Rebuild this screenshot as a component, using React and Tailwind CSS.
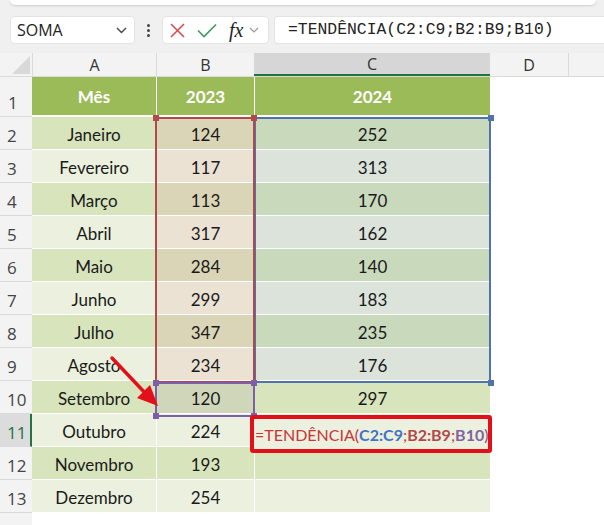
import React from "react";

const months = [
  ["Janeiro", 124, 252],
  ["Fevereiro", 117, 313],
  ["Março", 113, 170],
  ["Abril", 317, 162],
  ["Maio", 284, 140],
  ["Junho", 299, 183],
  ["Julho", 347, 235],
  ["Agosto", 234, 176],
  ["Setembro", 120, 297],
  ["Outubro", 224, null],
  ["Novembro", 193, null],
  ["Dezembro", 254, null],
];

function cellBg(col, rowIdx) {
  const even = rowIdx % 2 === 0;
  if (col === "A") return even ? "bg-[#d8e4bc]" : "bg-[#ebf1de]";
  if (col === "B") {
    if (rowIdx <= 7) return even ? "bg-[#dad5b6]" : "bg-[#ebe2d4]";
    if (rowIdx === 8) return "bg-[#cfd6b9]";
    return even ? "bg-[#d8e4bc]" : "bg-[#ebf1de]";
  }
  if (col === "C") {
    if (rowIdx <= 7) return even ? "bg-[#c9d9bc]" : "bg-[#dbe3db]";
    return even ? "bg-[#d8e4bc]" : "bg-[#ebf1de]";
  }
  return "bg-white";
}

function Handle({ className }) {
  return <div className={"absolute w-[6px] h-[6px] " + className} />;
}

export default function App() {
  return (
    <div className="w-[604px] h-[525px] overflow-hidden bg-[#f0f0f0] relative" style={{ fontFamily: "Lato, 'Open Sans', sans-serif" }}>
      {/* ribbon bottom */}
      <div className="h-[5px] ml-[10px] mr-[8px] bg-white rounded-b-[6px] shadow-[0_1px_2px_rgba(0,0,0,0.15)]" />

      {/* formula bar */}
      <div className="flex items-center h-[28px] mt-[11px] pl-[10px]">
        <div className="w-[125px] h-[28px] bg-white rounded-[4px] border border-[#e3e3e3] flex items-center justify-between pl-[6px] pr-[7px]">
          <span className="text-[16px] text-[#222]" style={{ fontFamily: "'Open Sans', sans-serif" }}>SOMA</span>
          <svg width="11" height="7" viewBox="0 0 11 7"><path d="M1 1 L5.5 5.5 L10 1" fill="none" stroke="#444" strokeWidth="1.4" /></svg>
        </div>
        <div className="w-[27px] flex flex-col items-center gap-[2px]">
          <div className="w-[3px] h-[3px] bg-[#444] rounded-full" />
          <div className="w-[3px] h-[3px] bg-[#444] rounded-full" />
          <div className="w-[3px] h-[3px] bg-[#444] rounded-full" />
        </div>
        <div className="w-[107px] h-[28px] bg-white rounded-[4px] border border-[#e3e3e3] flex items-center pl-[7px]">
          <svg width="15" height="15" viewBox="0 0 15 15"><path d="M1 1 L14 14 M14 1 L1 14" stroke="#d9454a" strokeWidth="1.5" /></svg>
          <svg className="ml-[12px]" width="20" height="15" viewBox="0 0 20 15"><path d="M1 7.5 L7 13.5 L19 1.5" fill="none" stroke="#3d9b5a" strokeWidth="1.6" /></svg>
          <span className="ml-[12px] italic text-[20px] leading-none text-[#222]" style={{ fontFamily: "'Liberation Serif', serif" }}>fx</span>
          <svg className="ml-[6px]" width="10" height="6" viewBox="0 0 10 6"><path d="M1 1 L5 5 L9 1" fill="none" stroke="#999" strokeWidth="1.2" /></svg>
        </div>
        <div className="flex-1 ml-[5px] h-[28px] bg-white rounded-l-[4px] border border-r-0 border-[#e3e3e3] flex items-center pl-[13px]">
          <span className="text-[16.4px] text-[#222]" style={{ fontFamily: "'Liberation Mono', monospace" }}>=TENDÊNCIA(C2:C9;B2:B9;B10)</span>
        </div>
      </div>

      {/* grid */}
      <div className="relative mt-[9px]">
        {/* column headers */}
        <div className="flex h-[24px] bg-[#f3f3f3] border-b border-[#dadada] text-[16px] text-[#333]" style={{ fontFamily: "'Open Sans', sans-serif" }}>
          <div className="w-[32px] relative">
            <svg className="absolute left-[12px] top-[3px]" width="18" height="18" viewBox="0 0 18 18"><path d="M18 0 L18 18 L0 18 Z" fill="#d9d9d9" /></svg>
          </div>
          <div className="w-[124px] flex items-center justify-center border-l border-[#dadada]">A</div>
          <div className="w-[98px] flex items-center justify-center border-l border-[#dadada]">B</div>
          <div className="w-[236px] flex items-center justify-center bg-[#d6d6d6] border-b-2 border-[#217346]">C</div>
          <div className="w-[79px] flex items-center justify-center border-r border-[#dadada]">D</div>
          <div className="flex-1" />
        </div>

        {/* row 1 */}
        <div className="flex h-[40px]">
          <div className="w-[32px] bg-[#f3f3f3] border-b border-[#dadada] flex items-end pb-[1px] pl-[8px] text-[17px] text-[#444]" style={{ fontFamily: "'Open Sans', sans-serif" }}>1</div>
          <div className="w-[124px] bg-[#9bbb59] border-b-[2px] border-white flex items-center justify-center pt-[2px] text-white font-bold text-[17px]">Mês</div>
          <div className="w-[98px] bg-[#9bbb59] border-l border-b-[2px] border-white flex items-center justify-center pt-[2px] text-white font-bold text-[17px]">2023</div>
          <div className="w-[236px] bg-[#9bbb59] border-l border-b-[2px] border-white flex items-center justify-center pt-[2px] text-white font-bold text-[17px]">2024</div>
          <div className="flex-1 bg-white" />
        </div>

        {/* data rows */}
        {months.map(([m, b, c], i) => {
          const rowNum = i + 2;
          const active = rowNum === 11;
          return (
            <div key={m} className="flex h-[33px] text-[17px] text-[#1a1a1a]">
              <div
                className={
                  "w-[32px] border-b border-[#dadada] flex items-end pb-[1px] pl-[7px] text-[17px] " +
                  (active ? "bg-[#dcdcdc] text-[#217346] border-r-2 border-r-[#217346]" : "bg-[#f3f3f3] text-[#444]")
                }
                style={{ fontFamily: "'Open Sans', sans-serif" }}
              >
                {rowNum}
              </div>
              <div className={"w-[124px] border-b border-white flex items-center justify-center pt-[3px] " + cellBg("A", i)}>{m}</div>
              <div className={"w-[98px] border-l border-b border-white flex items-center justify-center pt-[3px] " + cellBg("B", i)}>{b}</div>
              <div className={"w-[236px] border-l border-b border-white flex items-center justify-center pt-[3px] " + cellBg("C", i)}>{c}</div>
              <div className="flex-1 bg-white" />
            </div>
          );
        })}

        {/* row 14 */}
        <div className="flex h-[33px]">
          <div className="w-[32px] bg-[#f3f3f3] pl-[7px] pt-[6px] text-[17px] text-[#444]" style={{ fontFamily: "'Open Sans', sans-serif" }}>14</div>
          <div className="flex-1 bg-white" />
        </div>

        {/* blue range C2:C9 */}
        <div className="absolute left-[254px] top-[64px] w-[237px] h-[266px] border-2 border-[#4e73ad] pointer-events-none" />
        {/* red range B2:B9 */}
        <div className="absolute left-[155px] top-[64px] w-[100px] h-[266px] border-2 border-[#b0484c] pointer-events-none" />
        {/* purple range B10 */}
        <div className="absolute left-[155px] top-[329px] w-[100px] h-[35px] border-2 border-[#7d5ea8] pointer-events-none" />

        <Handle className="left-[153px] top-[62px] bg-[#b0484c]" />
        <Handle className="left-[251px] top-[62px] bg-[#b0484c]" />
        <Handle className="left-[488px] top-[62px] bg-[#4e73ad]" />
        <Handle className="left-[488px] top-[327px] bg-[#4e73ad]" />
        <Handle className="left-[153px] top-[327px] bg-[#7d5ea8]" />
        <Handle className="left-[251px] top-[327px] bg-[#7d5ea8]" />
        <Handle className="left-[153px] top-[360px] bg-[#7d5ea8]" />
        <Handle className="left-[251px] top-[360px] bg-[#7d5ea8]" />

        {/* active cell formula + red annotation box */}
        <div className="absolute left-[250px] top-[362px] w-[242px] h-[38px] border-[4px] border-[#e3101a] rounded-[3px] bg-[#ebf1de] flex items-center pl-[1px] pt-[2px] text-[16px] whitespace-nowrap">
          <span className="text-[#c8353b]">=TENDÊNCIA(</span>
          <span className="text-[#4472c4] font-bold">C2:C9</span>
          <span className="text-[#c8353b]">;</span>
          <span className="text-[#b0484c] font-bold">B2:B9</span>
          <span className="text-[#c8353b]">;</span>
          <span className="text-[#8064a2] font-bold">B10</span>
          <span className="text-[#9a4a7a]">)</span>
          <span className="ml-[2px] w-[1px] h-[26px] bg-black" />
        </div>

        {/* arrow */}
        <svg className="absolute left-[105px] top-[300px] pointer-events-none" width="60" height="60" viewBox="0 0 60 60">
          <line x1="7" y1="5" x2="42" y2="42" stroke="#e3101a" strokeWidth="3.5" strokeLinecap="round" />
          <path d="M53 53 L32 45 L45 32 Z" fill="#e3101a" />
        </svg>
      </div>
    </div>
  );
}
